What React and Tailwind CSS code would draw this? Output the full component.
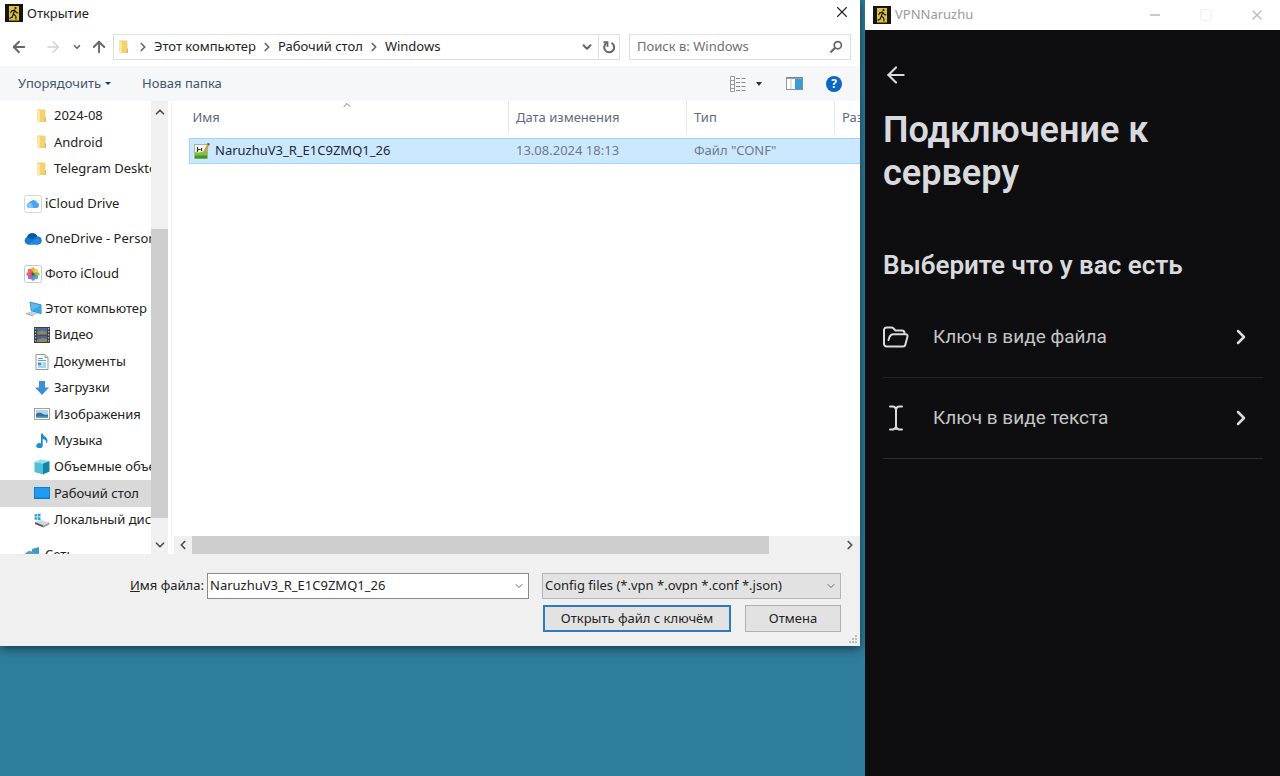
import { ArrowLeft, ArrowRight, ArrowUp, ChevronDown, ChevronLeft, ChevronRight, ChevronUp, Minus, Square, X } from 'lucide-react';

const AppLogo = () => (
  <svg viewBox="0 0 18 18" className="w-[18px] h-[18px] shrink-0" aria-hidden="true">
    <rect width="18" height="18" fill="#17150f" />
    <rect x="4" y="2" width="10" height="14.5" fill="#dcc23c" />
    <circle cx="10.5" cy="4" r="1.1" fill="#17150f" />
    <path d="M9.8 5.8 8.4 9.8l2.4 2.4.2 3.3M8.4 10 7.2 13 4.6 14.4M9.6 6 6.8 6.8 5.6 9M9.800 6.400l1.700 2.300 1.800.2" fill="none" stroke="#17150f" strokeWidth="1.200" />
  </svg>
);

const FolderIcon = () => (
  <svg viewBox="0 0 16 16" className="w-4 h-4 shrink-0" aria-hidden="true">
    <path d="M3 1.500h7.500l1 1V14H3z" fill="#f2d272" />
    <path d="M3 1.500 6 3v12L3 14z" fill="#fbe7a3" />
    <path d="M10.500 9.500H12V14h-1.500z" fill="#e0bb5c" />
  </svg>
);

const ICloudIcon = () => (
  <svg viewBox="0 0 18 18" className="w-[18px] h-[18px] shrink-0" aria-hidden="true">
    <rect x=".5" y=".5" width="17" height="17" rx="2" fill="#fff" stroke="#d2d6da" />
    <path d="M5 13a2.600 2.600 0 0 1-.4-5.100A2.500 2.500 0 0 1 7 6.200 3.600 3.600 0 0 1 13 7.600 2.800 2.800 0 0 1 13 13z" fill="#45a5f0" />
    <path d="M5 13a2.600 2.600 0 0 1-.4-5.100C7 7.200 9 9 9 13z" fill="#7cc6fa" />
  </svg>
);

const OneDriveIcon = () => (
  <svg viewBox="0 0 18 18" className="w-[18px] h-[18px] shrink-0" aria-hidden="true">
    <path d="M3.500 14.500A4 4 0 0 1 3 7 5.600 5.600 0 0 1 13.400 6.600 4 4 0 0 1 14.500 14.500z" fill="#1678d0" />
    <path d="M3 7a5.600 5.600 0 0 1 10.400-.4L8 9.500z" fill="#0a57a8" />
    <path d="M3.500 14.500 13 8.200a3.300 3.300 0 0 1 1.500 6.300z" fill="#2088dc" />
  </svg>
);

const petals = ['#f3a02c', '#e9d434', '#8fc24a', '#45a98f', '#4b86d4', '#8d62b8', '#d6508c', '#ea5a3a'];

const PhotosIcon = () => (
  <svg viewBox="0 0 18 18" className="w-[18px] h-[18px] shrink-0" aria-hidden="true">
    <rect x=".5" y=".5" width="17" height="17" rx="2" fill="#fff" stroke="#c6cace" />
    {petals.map((color, i) => (
      <ellipse key={color} cx="9" cy="5.500" rx="2" ry="3.200" fill={color} opacity=".9" transform={`rotate(${i * 45} 9 9)`} />
    ))}
    <circle cx="9" cy="9" r="1.500" fill="#6b4a34" />
  </svg>
);

const ComputerIcon = () => (
  <svg viewBox="0 0 18 18" className="w-[18px] h-[18px] shrink-0" aria-hidden="true">
    <path d="M5.500 1.500 17.500 4.500v9.800L7 11.300z" fill="#2b8fd0" />
    <path d="m6.500 2.700 10 2.600v7.500L7.800 10.400z" fill="#5cbcf0" />
    <path d="M16.500 5.300v7.500L7.800 10.400z" fill="#3ba4e2" />
    <path d="m2 13 5-1.500 7 2-5 2.200z" fill="#c3cdd6" />
    <path d="m2 13 7 2.700v.8L2 14z" fill="#8e9aa6" />
  </svg>
);

const VideoIcon = () => (
  <svg viewBox="0 0 16 16" className="w-4 h-4 shrink-0" aria-hidden="true">
    <rect width="16" height="16" fill="#3a3d46" />
    <rect x="3" y="1" width="10" height="6.500" fill="#4d6ca8" />
    <rect x="3" y="8.500" width="10" height="6.500" fill="#4a62a0" />
    <path d="M3 5.500 8 3.500l5 2v2H3zM3 13l6-2 4 1v3H3z" fill="#8f8a58" />
    <path d="M1.500 1v14M14.500 1v14" stroke="#b9bdc6" strokeWidth="1.200" strokeDasharray="1.500 1.500" />
  </svg>
);

const DocumentIcon = () => (
  <svg viewBox="0 0 16 16" className="w-4 h-4 shrink-0" aria-hidden="true">
    <path d="M2 .5h9L14 3.500v12H2z" fill="#fff" stroke="#8d9aa5" />
    <path d="M11 .5V3.500h3" fill="#dce6ee" stroke="#8d9aa5" />
    <path d="M4 4.500h5M4 6.500h8M8.500 9H12M8.500 11H12M4 13h8" stroke="#5ba4d6" />
    <rect x="4" y="8.500" width="3.500" height="3" fill="#3f94cf" />
  </svg>
);

const DownloadsIcon = () => (
  <svg viewBox="0 0 16 16" className="w-4 h-4 shrink-0" aria-hidden="true">
    <path d="M5 1h6v6.500h4L8 15 1 7.500h4z" fill="#3c8fd8" />
  </svg>
);

const PicturesIcon = () => (
  <svg viewBox="0 0 16 16" className="w-4 h-4 shrink-0" aria-hidden="true">
    <rect x=".5" y="2.500" width="15" height="11" fill="#fff" stroke="#9aa3ab" />
    <rect x="2" y="4" width="12" height="8" fill="#a9d7f2" />
    <path d="M2 8c3-2 5-1 7 0s4 1 5 .5V12H2z" fill="#3b6e8f" />
    <path d="M2 10.500h12V12H2z" fill="#5fa0c8" />
  </svg>
);

const MusicIcon = () => (
  <svg viewBox="0 0 16 16" className="w-4 h-4 shrink-0" aria-hidden="true">
    <ellipse cx="5.500" cy="12.500" rx="3.200" ry="2.600" fill="#1e8bd4" />
    <path d="M7 .5h1.700c.3 3 4.800 3.500 4.800 7.200 0 1.300-.5 2.300-1.200 3 .3-3-1.300-4.200-3.600-4.600v6.400H7z" fill="#1e8bd4" />
  </svg>
);

const CubeIcon = () => (
  <svg viewBox="0 0 16 16" className="w-4 h-4 shrink-0" aria-hidden="true">
    <path d="M.5 3 7 .5 15.500 2 9 4.500z" fill="#8fe0ef" />
    <path d="M.5 3 9 4.500v11L.5 13z" fill="#4fc0d8" />
    <path d="M9 4.500 15.500 2v10.500L9 15.500z" fill="#1584a8" />
  </svg>
);

const DesktopIcon = () => (
  <svg viewBox="0 0 16 16" className="w-4 h-4 shrink-0" aria-hidden="true">
    <rect y="2" width="16" height="12" fill="#0d78cf" />
    <rect x=".8" y="2.800" width="14.400" height="9.800" fill="#1e9cf4" />
  </svg>
);

const DiskIcon = () => (
  <svg viewBox="0 0 16 16" className="w-4 h-4 shrink-0" aria-hidden="true">
    <path d="M.5 2.500 3 2v2.500H.5zM3.600 1.900 6.500 1.500v3H3.600zM.5 5.200H3v2.500l-2.500-.3zM3.600 5.200h2.900v3l-2.900-.4z" fill="#1fa5d8" />
    <path d="m1 10 6-2 8.500 2.500-6 3z" fill="#d5d8db" />
    <path d="m1 10 8.500 3.500v2L1 12z" fill="#55595e" />
    <path d="m9.500 13.500 6-3v2l-6 3z" fill="#999ea3" />
  </svg>
);

const NetworkIcon = () => (
  <svg viewBox="0 0 18 18" className="w-[18px] h-[18px] shrink-0" aria-hidden="true">
    <path d="M8 3 15 1v12l-7-2z" fill="#3c9cc8" />
    <path d="M1 8c2-3 5-4 8-2l5 2v5L2 11z" fill="#5a9fbc" />
    <circle cx="8" cy="12" r="4" fill="#2f82b4" />
  </svg>
);

const ConfFileIcon = () => (
  <svg viewBox="0 0 18 18" className="w-[18px] h-[18px] shrink-0" aria-hidden="true">
    <rect x="1.500" y="2.500" width="13" height="14" fill="#f7f9f3" stroke="#a9b3a2" />
    <path d="M2 10c4 1 8 0 12-2v8H2z" fill="#7cc43a" />
    <path d="M2 13.500h12v3H2z" fill="#3c9a26" />
    <path d="M4.500 5v5M4.500 7.500h3M8.500 6v3" stroke="#2c3a26" strokeWidth="1.200" />
    <path d="m10 10 4.500-8.500 2 1.200L12 11l-2 1z" fill="#c8a24a" />
    <path d="m14.500 1.500 2 1.200" stroke="#7a4a2a" strokeWidth="1.500" />
  </svg>
);

const SearchIcon = () => (
  <svg viewBox="0 0 14 14" className="w-3.5 h-3.5 shrink-0" fill="none" stroke="#666" aria-hidden="true">
    <circle cx="8.800" cy="5.200" r="3.600" strokeWidth="1.700" />
    <path d="M6.200 7.800 1.500 12.500" strokeWidth="2.200" />
  </svg>
);

const RefreshIcon = () => (
  <svg viewBox="0 0 14 14" className="w-3.5 h-3.5 shrink-0" fill="none" stroke="#666" strokeWidth="2" aria-hidden="true">
    <path d="M9.500 2.800A5 5 0 1 1 4.500 3" />
    <path d="M5.500 7V2.200H1.500" strokeWidth="1.800" />
  </svg>
);

const ViewIcon = () => (
  <svg viewBox="0 0 17 16" className="w-[17px] h-4" fill="none" aria-hidden="true">
    <path d="M.5.5h4v15h-4zM.5 4.500h4M.5 8.500h4M.5 12.500h4" stroke="#9a9a9a" />
    <path d="M6 2.500h10M6 6.500h10M6 10.500h10M6 14.500h10" stroke="#858b91" strokeDasharray="4 1.500" />
  </svg>
);

const PreviewIcon = () => (
  <svg viewBox="0 0 17 13" className="w-[17px] h-[13px]" aria-hidden="true">
    <rect x=".5" y=".5" width="16" height="12" fill="#fff" stroke="#8b98a4" />
    <path d="M.5 1h16" stroke="#6b7b8a" strokeWidth="1.400" />
    <rect x="9" y="2" width="7.500" height="10.500" fill="#3e9ad6" />
    <path d="M5 2v10" stroke="#c4ccd4" />
  </svg>
);

const OpenFolderIcon = () => (
  <svg viewBox="0 0 26 24" className="w-[26px] h-6" fill="none" stroke="#d9dadd" strokeWidth="2" strokeLinecap="round" strokeLinejoin="round" aria-hidden="true">
    <path d="M21.500 9V8A2.500 2.500 0 0 0 19 5.500h-6.500L10 3a2 2 0 0 0-1.500-.5H3.500A2.500 2.500 0 0 0 1 5v14a2.500 2.500 0 0 0 2.500 2.500H20a2.500 2.500 0 0 0 2.400-2L24.500 11.500A1.800 1.800 0 0 0 22.700 9.200H10.500A4.500 4.500 0 0 0 6.500 12L5.500 15" />
  </svg>
);

const TextCursorIcon = () => (
  <svg viewBox="0 0 26 26" className="w-[26px] h-[26px]" fill="none" stroke="#d9dadd" strokeWidth="2" strokeLinecap="round" strokeLinejoin="round" aria-hidden="true">
    <path d="M7 1.500h2.500a3.500 3.500 0 0 1 3.500 3 3.500 3.500 0 0 1 3.500-3H19M13 4.500v17M7 24.500h2.500a3.500 3.500 0 0 0 3.500-3 3.500 3.500 0 0 0 3.500 3H19" />
  </svg>
);

const folders = ['2024-08', 'Android', 'Telegram Desktop'];

const roots = [
  { label: 'iCloud Drive', icon: ICloudIcon },
  { label: 'OneDrive - Personal', icon: OneDriveIcon },
  { label: 'Фото iCloud', icon: PhotosIcon },
  { label: 'Этот компьютер', icon: ComputerIcon },
];

const places = [
  { label: 'Видео', icon: VideoIcon },
  { label: 'Документы', icon: DocumentIcon },
  { label: 'Загрузки', icon: DownloadsIcon },
  { label: 'Изображения', icon: PicturesIcon },
  { label: 'Музыка', icon: MusicIcon },
  { label: 'Объемные объекты', icon: CubeIcon },
  { label: 'Рабочий стол', icon: DesktopIcon, active: true },
  { label: 'Локальный диск (C:)', icon: DiskIcon },
];

const RootItem = ({ label, icon: Icon }) => (
  <button className="flex h-[26px] w-full shrink-0 items-center gap-[3px] pl-6 whitespace-nowrap">
    <Icon />
    {label}
  </button>
);

const ChildItem = ({ label, icon: Icon, active }) => (
  <button className={`flex w-full flex-1 items-center gap-1 pl-[34px] whitespace-nowrap ${active ? 'bg-[#d9d9d9]' : ''}`}>
    <Icon />
    {label}
  </button>
);

const Sidebar = () => (
  <aside className="flex w-[172px] shrink-0 border-r border-[#f3f3f3]">
    <nav className="flex w-[151px] flex-col gap-[9px] overflow-hidden pt-0.5">
      <div className="flex h-[79px] shrink-0 flex-col">
        {folders.map((name) => (
          <ChildItem key={name} label={name} icon={FolderIcon} />
        ))}
      </div>
      {roots.slice(0, 3).map((item) => (
        <RootItem key={item.label} {...item} />
      ))}
      <div className="shrink-0">
        <RootItem {...roots[3]} />
        <div className="flex h-[211px] flex-col">
          {places.map((item) => (
            <ChildItem key={item.label} {...item} />
          ))}
        </div>
      </div>
      <RootItem label="Сеть" icon={NetworkIcon} />
    </nav>
    <div className="flex w-[17px] flex-col bg-[#f0f0f0]">
      <button aria-label="Вверх" className="flex h-[22px] items-center justify-center text-[#505050]">
        <ChevronUp className="h-3.5 w-3.5" strokeWidth={3} />
      </button>
      <div className="grow-[106]" />
      <div className="grow-[289] bg-[#cdcdcd]" />
      <div className="grow-[18]" />
      <button aria-label="Вниз" className="flex h-[18px] items-center justify-center text-[#505050]">
        <ChevronDown className="h-3.5 w-3.5" strokeWidth={3} />
      </button>
    </div>
  </aside>
);

const FileList = () => (
  <div className="flex min-w-0 flex-1 flex-col">
    <div className="relative flex-1 overflow-hidden pl-[17px]">
      <ChevronUp className="absolute -top-0.5 left-[169px] h-3 w-3 text-[#777]" strokeWidth={2} />
      <table className="w-full table-fixed border-collapse whitespace-nowrap">
        <colgroup>
          <col />
          <col className="w-[178px]" />
          <col className="w-[148px]" />
          <col className="w-[25px]" />
        </colgroup>
        <thead>
          <tr className="text-left text-[#5d6b7e]">
            <th className="p-0 pb-1 font-normal"><div className="h-[33px] border-r border-[#e8e8e8] pl-[3px] leading-8">Имя</div></th>
            <th className="p-0 pb-1 font-normal"><div className="h-[33px] border-r border-[#e8e8e8] pl-[7px] leading-8">Дата изменения</div></th>
            <th className="p-0 pb-1 font-normal"><div className="h-[33px] border-r border-[#e8e8e8] pl-[7px] leading-8">Тип</div></th>
            <th className="p-0 pb-1 font-normal"><div className="h-[33px] overflow-hidden pl-[7px] leading-8">Размер</div></th>
          </tr>
        </thead>
        <tbody>
          <tr className="h-[25px] border border-r-0 border-[#a5d4f7] bg-[#cce8ff] text-[#6d7a86]">
            <td className="p-0">
              <div className="flex items-center gap-1 pl-[3px] text-[#1b2a38]">
                <ConfFileIcon />
                NaruzhuV3_R_E1C9ZMQ1_26
              </div>
            </td>
            <td className="p-0 pl-[7px]">13.08.2024 18:13</td>
            <td className="p-0 pl-[7px]">Файл "CONF"</td>
            <td />
          </tr>
        </tbody>
      </table>
    </div>
    <div className="ml-0.5 flex h-[18px] bg-[#f0f0f0] text-[#505050]">
      <button aria-label="Влево" className="flex w-[18px] items-center justify-center">
        <ChevronLeft className="h-3.5 w-3.5" strokeWidth={3} />
      </button>
      <div className="grow-[577] bg-[#cdcdcd]" />
      <div className="grow-[71]" />
      <button aria-label="Вправо" className="flex w-5 items-center justify-center">
        <ChevronRight className="h-3.5 w-3.5" strokeWidth={3} />
      </button>
    </div>
  </div>
);

const AddressBar = () => (
  <div className="flex h-[26px] items-center pr-[9px] pl-2.5 text-[#666]">
    <button aria-label="Назад" className="flex w-[18px] justify-center"><ArrowLeft className="h-[18px] w-[18px] shrink-0" strokeWidth={2.500} /></button>
    <button aria-label="Вперёд" className="ml-4 flex w-[18px] justify-center text-[#d0d0d0]"><ArrowRight className="h-[18px] w-[18px] shrink-0" /></button>
    <button aria-label="Последние расположения" className="ml-2.5 flex w-2.5 justify-center"><ChevronDown className="h-2.5 w-2.5 shrink-0" strokeWidth={4} /></button>
    <button aria-label="Наверх" className="ml-2 flex w-[18px] justify-center"><ArrowUp className="h-[18px] w-[18px] shrink-0" strokeWidth={2.500} /></button>
    <div className="ml-[5px] flex h-[26px] flex-1 items-center border border-[#dedede] pl-0.5 whitespace-nowrap text-[#222]">
      <FolderIcon />
      {['Этот компьютер', 'Рабочий стол', 'Windows'].map((part) => (
        <div key={part} className="flex items-center">
          <ChevronRight className="mx-1 h-3.5 w-3.5 text-[#666]" strokeWidth={3} />
          <button>{part}</button>
        </div>
      ))}
      <button aria-label="Предыдущие расположения" className="mr-1 ml-auto text-[#666]"><ChevronDown className="h-3.5 w-3.5" strokeWidth={3.500} /></button>
      <button aria-label="Обновить" className="flex h-full w-[21px] items-center justify-center border-l border-[#dedede]">
        <RefreshIcon />
      </button>
    </div>
    <div className="ml-[9px] flex h-[26px] w-[222px] items-center border border-[#dedede] pr-[7px] pl-[7px]">
      <input aria-label="Поиск" placeholder="Поиск в: Windows" className="min-w-0 flex-1 outline-none placeholder:text-[#6f6f6f]" />
      <SearchIcon />
    </div>
  </div>
);

const Toolbar = () => (
  <div className="mt-[6px] flex h-[35px] items-center bg-[#f5f7f9] pr-[18px] pl-[18px] text-[#44546a]">
    <button className="flex items-center gap-1">
      Упорядочить
      <span className="border-x-[3px] border-t-[3px] border-x-transparent border-t-[#1e395b]" />
    </button>
    <button className="ml-[31px]">Новая папка</button>
    <button aria-label="Вид" className="ml-auto flex items-center gap-[9px]">
      <ViewIcon />
      <span className="border-x-[3px] border-t-[4px] border-x-transparent border-t-[#333]" />
    </button>
    <button aria-label="Область просмотра" className="ml-6"><PreviewIcon /></button>
    <button aria-label="Справка" className="ml-[23px] h-4 w-4 rounded-full bg-[#0c66c4] text-xs leading-4 font-bold text-white">?</button>
  </div>
);

const DialogFooter = () => (
  <footer className="relative h-[92px] bg-[#f0f0f0] pt-[19px] pr-[19px] text-[#222]">
    <div className="flex items-center">
      <label htmlFor="file-name" className="ml-[130px] w-[77px] whitespace-nowrap"><u>И</u>мя файла:</label>
      <div className="flex h-[26px] flex-1 items-center border border-[#8a8a8a] bg-white pr-[3px]">
        <input id="file-name" defaultValue="NaruzhuV3_R_E1C9ZMQ1_26" className="min-w-0 flex-1 pl-0.5 outline-none" />
        <ChevronDown className="h-3 w-3 text-[#666]" />
      </div>
      <div className="relative ml-[13px] w-[299px]">
        <select aria-label="Тип файлов" className="block h-[26px] w-full appearance-none border border-[#b5b5b5] bg-[#e2e2e2] pl-0.5">
          <option>Config files (*.vpn *.ovpn *.conf *.json)</option>
        </select>
        <ChevronDown className="pointer-events-none absolute top-[7px] right-1 h-3 w-3 text-[#666]" />
      </div>
    </div>
    <div className="mt-1.5 flex justify-end gap-3.5">
      <button className="h-[27px] w-[188px] border-2 border-[#2f7cbc] bg-[#e2e2e2]">Открыть файл с ключём</button>
      <button className="h-[27px] w-24 border border-[#b0b0b0] bg-[#e2e2e2]">Отмена</button>
    </div>
    <svg viewBox="0 0 10 10" className="absolute right-0.5 bottom-0.5 h-2.5 w-2.5" fill="#bcbcbc" aria-hidden="true">
      <path d="M7 1h2v2H7zM4 4h2v2H4zM7 4h2v2H7zM1 7h2v2H1zM4 7h2v2H4zM7 7h2v2H7z" />
    </svg>
  </footer>
);

const OpenDialog = () => (
  <section className="flex min-w-0 flex-1 flex-col self-start bg-white font-['Noto_Sans','Open_Sans',sans-serif] text-[13px] text-[#222] shadow-[0_2px_10px_rgba(0,0,0,0.6)]">
    <header className="flex h-[34px] items-start justify-between pt-[3px] pr-[9px] pl-[5px]">
      <div className="flex items-center gap-1">
        <AppLogo />
        <h1 className="leading-[20px]">Открытие</h1>
      </div>
      <button aria-label="Закрыть"><X className="h-[18px] w-[18px]" strokeWidth={1.500} /></button>
    </header>
    <AddressBar />
    <Toolbar />
    <div className="flex h-[453px] overflow-hidden">
      <Sidebar />
      <FileList />
    </div>
    <DialogFooter />
  </section>
);

const options = [
  { label: 'Ключ в виде файла', icon: OpenFolderIcon, line: 'border-[#222325]' },
  { label: 'Ключ в виде текста', icon: TextCursorIcon, line: 'border-[#2c2d30]' },
];

const VpnWindow = () => (
  <section className="flex w-[415px] shrink-0 flex-col bg-[#0e0e10] font-['Roboto','Inter',sans-serif] text-[#d9dadd]">
    <header className="flex h-[30px] items-center bg-white pr-[15px] pl-2 font-['Noto_Sans','Open_Sans',sans-serif] text-[13px] text-[#999]">
      <AppLogo />
      <span className="ml-1">VPNNaruzhu</span>
      <div className="ml-auto flex items-center gap-9">
        <button aria-label="Свернуть"><Minus className="h-4 w-4" strokeWidth={1.500} /></button>
        <button aria-label="Развернуть" className="text-[#ececec]"><Square className="h-3.5 w-3.5" strokeWidth={1.500} /></button>
        <button aria-label="Закрыть" className="text-[#bbb]"><X className="h-4 w-4" strokeWidth={2} /></button>
      </div>
    </header>
    <main className="pt-8 pr-[17px] pl-[18px]">
      <button aria-label="Назад" className="block"><ArrowLeft className="h-[26px] w-[26px]" strokeWidth={2} /></button>
      <h2 className="mt-[21px] text-[36px] leading-[43px] font-semibold">Подключение к серверу</h2>
      <h3 className="mt-[54px] text-[26px] leading-8 font-semibold">Выберите что у вас есть</h3>
      <ul className="mt-4">
        {options.map(({ label, icon: Icon, line }) => (
          <li key={label} className={`border-b ${line}`}>
            <button className="flex h-20 w-full items-center gap-6 text-[19px] font-normal text-[#c4c5c8]">
              <Icon />
              {label}
              <ChevronRight className="mr-2.5 ml-auto h-6 w-6 text-[#d9dadd]" strokeWidth={2.500} />
            </button>
          </li>
        ))}
      </ul>
    </main>
  </section>
);

const App = () => (
  <div className="flex min-h-screen gap-[5px] bg-[#2e7d9c]">
    <OpenDialog />
    <VpnWindow />
  </div>
);

export default App;
